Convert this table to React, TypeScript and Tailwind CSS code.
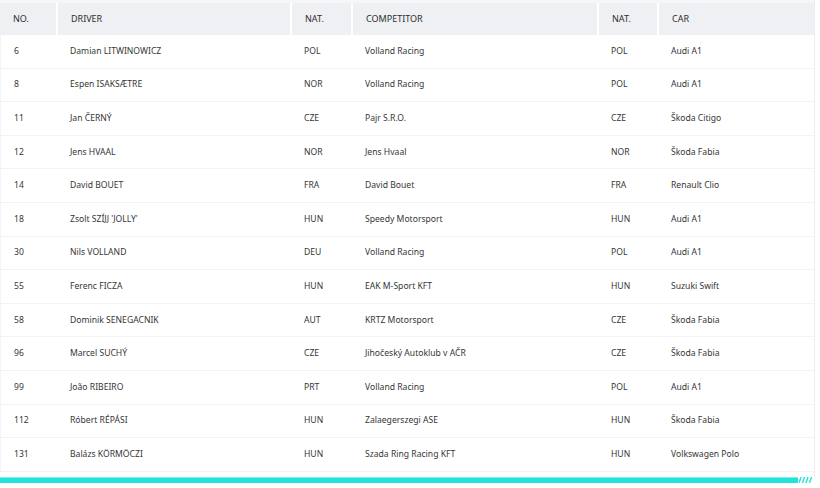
import React from "react";

const rows: string[][] = [
  ["6", "Damian LITWINOWICZ", "POL", "Volland Racing", "POL", "Audi A1"],
  ["8", "Espen ISAKSÆTRE", "NOR", "Volland Racing", "POL", "Audi A1"],
  ["11", "Jan ČERNÝ", "CZE", "Pajr S.R.O.", "CZE", "Škoda Citigo"],
  ["12", "Jens HVAAL", "NOR", "Jens Hvaal", "NOR", "Škoda Fabia"],
  ["14", "David BOUET", "FRA", "David Bouet", "FRA", "Renault Clio"],
  ["18", "Zsolt SZÍJJ 'JOLLY'", "HUN", "Speedy Motorsport", "HUN", "Audi A1"],
  ["30", "Nils VOLLAND", "DEU", "Volland Racing", "POL", "Audi A1"],
  ["55", "Ferenc FICZA", "HUN", "EAK M-Sport KFT", "HUN", "Suzuki Swift"],
  ["58", "Dominik SENEGACNIK", "AUT", "KRTZ Motorsport", "CZE", "Škoda Fabia"],
  ["96", "Marcel SUCHÝ", "CZE", "Jihočeský Autoklub v AČR", "CZE", "Škoda Fabia"],
  ["99", "João RIBEIRO", "PRT", "Volland Racing", "POL", "Audi A1"],
  ["112", "Róbert RÉPÁSI", "HUN", "Zalaegerszegi ASE", "HUN", "Škoda Fabia"],
  ["131", "Balázs KÖRMÖCZI", "HUN", "Szada Ring Racing KFT", "HUN", "Volkswagen Polo"],
];

const headers = ["NO.", "DRIVER", "NAT.", "COMPETITOR", "NAT.", "CAR"];
const grid = "grid grid-cols-[56px_234px_61px_246px_60px_156px]";

export default function App() {
  return (
    <div
      className="w-[820px] h-[488px] bg-white overflow-hidden text-[#363636]"
      style={{ fontFamily: "'Noto Sans', 'Liberation Sans', sans-serif" }}
    >
      <div className="w-[815px] border-r border-[#ececee]">
        <div className="h-[3px] bg-[#f6f6f8]" />
        <div className={`${grid} h-[32px] bg-[#eef0f4] text-[9px] text-[#2e2e2e]`}>
          {headers.map((h, i) => (
            <div
              key={i}
              className={`flex items-center pl-[13px] ${i > 0 ? "border-l-2 border-white" : ""}`}
            >
              {h}
            </div>
          ))}
        </div>
        {rows.map((r, ri) => (
          <div
            key={ri}
            className={`${grid} h-[33.6px] text-[8.6px] border-b border-[#f3f3f5] border-l border-l-[#f4f4f6]`}
          >
            {r.map((c, ci) => (
              <div key={ci} className="flex items-center pl-[13px] whitespace-nowrap">
                {c}
              </div>
            ))}
          </div>
        ))}
        <div className="h-[5px]" />
      </div>
      <div className="flex w-[813px] h-[6px] items-stretch">
        <div className="flex-1 bg-[#22e3dc] border-t border-[#7ef0eb]" />
        <svg width="14" height="6" viewBox="0 0 14 6" className="ml-[1px]">
          <g stroke="#22e3dc" strokeWidth="1.4">
            <line x1="0" y1="6" x2="2" y2="0" />
            <line x1="3.5" y1="6" x2="5.5" y2="0" />
            <line x1="7" y1="6" x2="9" y2="0" />
            <line x1="10.5" y1="6" x2="12.5" y2="0" />
          </g>
        </svg>
      </div>
    </div>
  );
}
